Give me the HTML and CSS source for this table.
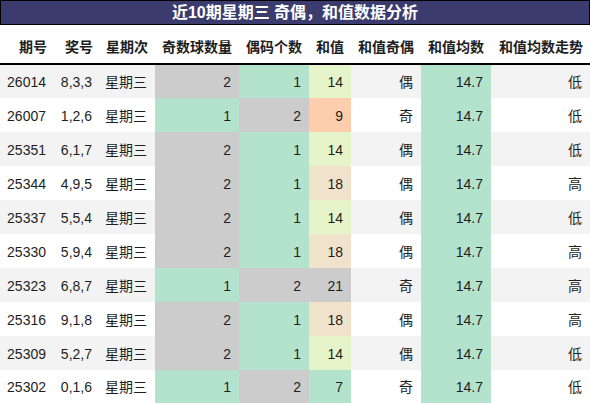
FILE: index.html
```html
<!DOCTYPE html>
<html lang="zh-CN">
<head>
<meta charset="utf-8">
<title>近10期星期三 奇偶，和值数据分析</title>
<link rel="stylesheet" href="styles.css">
</head>
<body>
<div class="sheet">
  <div class="title">近10期星期三 奇偶，和值数据分析</div>
  <table class="grid">
    <colgroup>
      <col class="c1"><col class="c2"><col class="c3"><col class="c4"><col class="c5"><col class="c6"><col class="c7"><col class="c8"><col class="c9">
    </colgroup>
    <thead>
      <tr><th>期号</th><th>奖号</th><th>星期次</th><th>奇数球数量</th><th>偶码个数</th><th>和值</th><th>和值奇偶</th><th>和值均数</th><th>和值均数走势</th></tr>
    </thead>
    <tbody>
      <tr><td>26014</td><td>8,3,3</td><td>星期三</td><td class="gray">2</td><td class="green">1</td><td class="lime">14</td><td>偶</td><td class="green">14.7</td><td>低</td></tr>
      <tr><td>26007</td><td>1,2,6</td><td>星期三</td><td class="green">1</td><td class="gray">2</td><td class="orange">9</td><td>奇</td><td class="green">14.7</td><td>低</td></tr>
      <tr><td>25351</td><td>6,1,7</td><td>星期三</td><td class="gray">2</td><td class="green">1</td><td class="lime">14</td><td>偶</td><td class="green">14.7</td><td>低</td></tr>
      <tr><td>25344</td><td>4,9,5</td><td>星期三</td><td class="gray">2</td><td class="green">1</td><td class="beige">18</td><td>偶</td><td class="green">14.7</td><td>高</td></tr>
      <tr><td>25337</td><td>5,5,4</td><td>星期三</td><td class="gray">2</td><td class="green">1</td><td class="lime">14</td><td>偶</td><td class="green">14.7</td><td>低</td></tr>
      <tr><td>25330</td><td>5,9,4</td><td>星期三</td><td class="gray">2</td><td class="green">1</td><td class="beige">18</td><td>偶</td><td class="green">14.7</td><td>高</td></tr>
      <tr><td>25323</td><td>6,8,7</td><td>星期三</td><td class="green">1</td><td class="gray">2</td><td class="gray">21</td><td>奇</td><td class="green">14.7</td><td>高</td></tr>
      <tr><td>25316</td><td>9,1,8</td><td>星期三</td><td class="gray">2</td><td class="green">1</td><td class="beige">18</td><td>偶</td><td class="green">14.7</td><td>高</td></tr>
      <tr><td>25309</td><td>5,2,7</td><td>星期三</td><td class="gray">2</td><td class="green">1</td><td class="lime">14</td><td>偶</td><td class="green">14.7</td><td>低</td></tr>
      <tr><td>25302</td><td>0,1,6</td><td>星期三</td><td class="green">1</td><td class="gray">2</td><td class="green">7</td><td>奇</td><td class="green">14.7</td><td>低</td></tr>
    </tbody>
  </table>
</div>
</body>
</html>
```
FILE: styles.css
```css
html, body {
  margin: 0;
  padding: 0;
  background: #ffffff;
}

.sheet {
  width: 590px;
  font-family: "Liberation Sans", "Noto Sans CJK SC", sans-serif;
  color: #1e1e1e;
}

.title {
  box-sizing: border-box;
  height: 25px;
  border: 1px solid #000;
  background: #3c3b6e;
  color: #ffffff;
  font-weight: bold;
  font-size: 16px;
  line-height: 23px;
  text-align: center;
}

.grid {
  width: 590px;
  table-layout: fixed;
  border-collapse: collapse;
  font-size: 14px;
}

.c1 { width: 54px; }
.c2 { width: 46px; }
.c3 { width: 55px; }
.c4 { width: 84px; }
.c5 { width: 70px; }
.c6 { width: 42px; }
.c7 { width: 70px; }
.c8 { width: 70px; }
.c9 { width: 99px; }

.grid th {
  height: 39px;
  box-sizing: border-box;
  padding: 10px 7px 5px 0;
  text-align: right;
  font-weight: bold;
  line-height: 20px;
  white-space: nowrap;
  border-bottom: 2px solid #000;
}

.grid td {
  height: 34px;
  box-sizing: border-box;
  padding: 1px 8px 0 0;
  text-align: right;
  line-height: 20px;
  white-space: nowrap;
}

.grid tbody tr:nth-child(odd) {
  background: #f3f3f3;
}

.grid tbody tr:last-child td {
  border-bottom: 1px solid #eeeeee;
}

.gray { background: #cccccc; }
.green { background: #b3e2cd; }
.lime { background: #e6f5c9; }
.beige { background: #f1e2cc; }
.orange { background: #fdcdac; }
```
